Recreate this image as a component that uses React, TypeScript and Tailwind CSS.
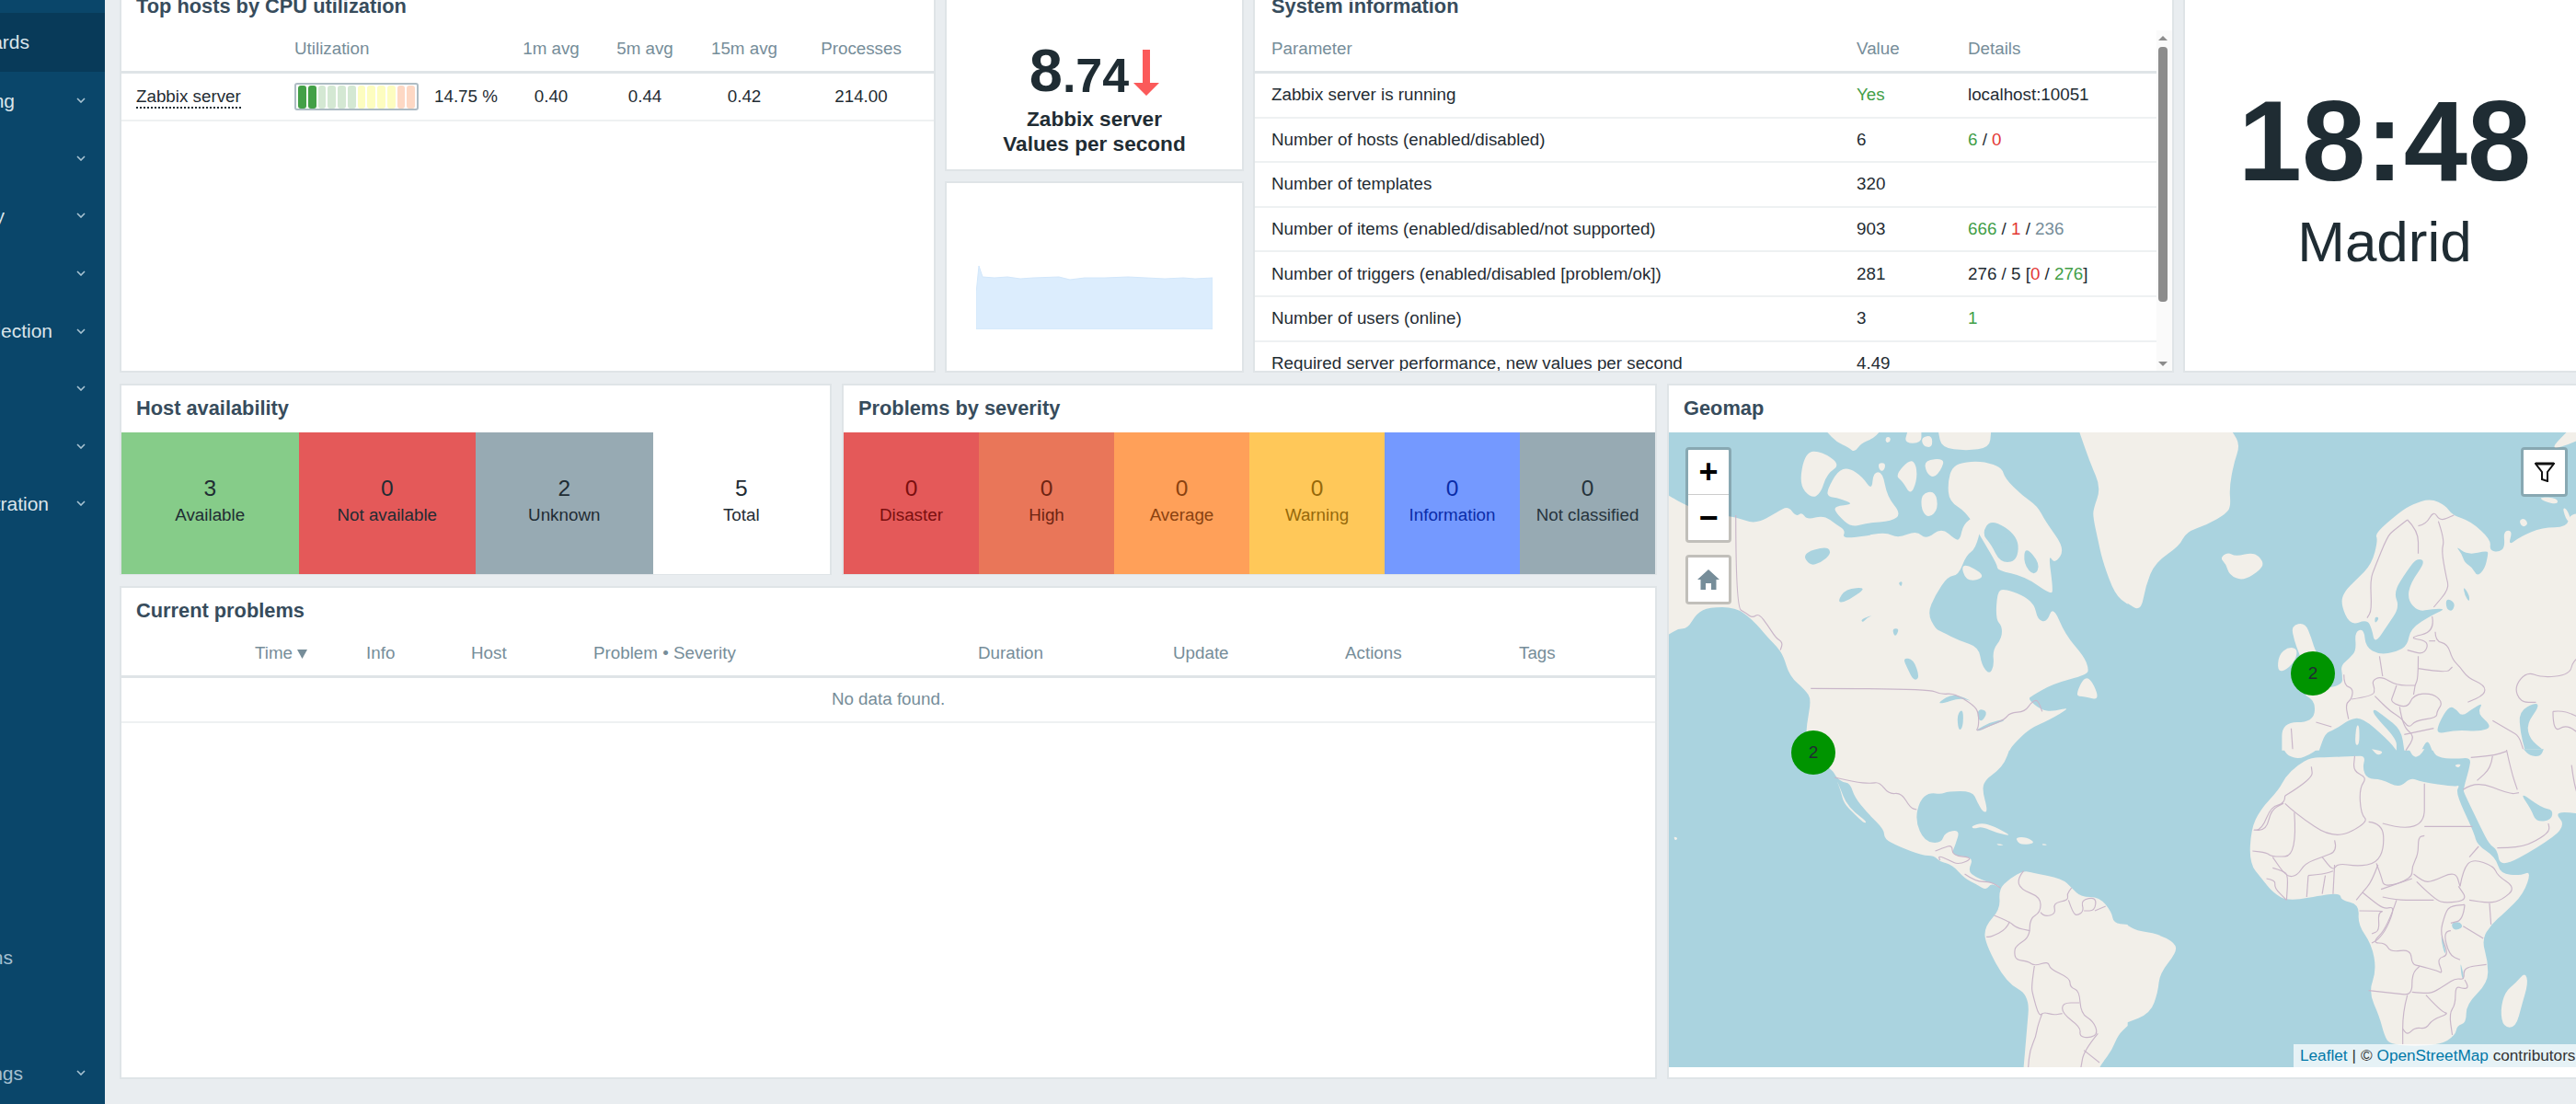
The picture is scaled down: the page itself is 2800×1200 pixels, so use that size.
// Zabbix global view dashboard, scrolled so that the top row and the sidebar are cut off
const navTop = [
  { label: "Dashboards", clip: "w-[32px]", active: true },
  { label: "Monitoring", clip: "w-[16px]" },
  { label: "Services", clip: "w-0" },
  { label: "Inventory", clip: "w-[5px]" },
  { label: "Reports", clip: "w-0" },
  { label: "Data collection", clip: "w-[57px]" },
  { label: "Alerts", clip: "w-0" },
  { label: "Users", clip: "w-0" },
  { label: "Administration", clip: "w-[53px]" },
]

const navBottom = [
  { label: "Integrations", clip: "w-[14px]", dim: true, noArrow: true },
  { label: "Help", clip: "w-0", dim: true, noArrow: true },
  { label: "User settings", clip: "w-[25px]", dim: true },
]

const cpuBars = [
  "bg-[#43a047]", "bg-[#43a047]", "bg-[#d4e8d3]", "bg-[#d4e8d3]", "bg-[#d4e8d3]", "bg-[#d4e8d3]",
  "bg-[#fdfdc0]", "bg-[#fdfdc0]", "bg-[#fdfdc0]", "bg-[#fdfdc0]", "bg-[#fdd8c4]", "bg-[#fdd8c4]",
]

const hostStats = [
  { n: 3, label: "Available", cls: "bg-[#86cc89] text-[#1f2c33]" },
  { n: 0, label: "Not available", cls: "bg-[#e45959] text-[#1f2c33]" },
  { n: 2, label: "Unknown", cls: "bg-[#97aab3] text-[#1f2c33]" },
  { n: 5, label: "Total", cls: "bg-white text-[#1f2c33]" },
]

const severities = [
  { label: "Disaster", cls: "bg-[#e45959] text-[#7a0f0f]" },
  { label: "High", cls: "bg-[#e97659] text-[#6e2412]" },
  { label: "Average", cls: "bg-[#ffa059] text-[#8a4210]" },
  { label: "Warning", cls: "bg-[#ffc859] text-[#96690a]" },
  { label: "Information", cls: "bg-[#7499ff] text-[#0a2ca8]" },
  { label: "Not classified", cls: "bg-[#97aab3] text-[#26343c]" },
]

const problemCols = ["", "Time", "Info", "Host", "Problem • Severity", "Duration", "Update", "Actions", "Tags"]

// map outlines, traced per quadrant in 3x map pixels
const landA = [
  "-2,205 15,215 50,235 120,265 215,275 280,300 350,260 385,240 410,275 430,260 445,285 500,270 540,300 570,320 560,345 620,340 700,325 740,345 800,320 830,350 880,310 925,350 940,350 950,300 990,270 1010,300 990,380 960,400 935,465 900,470 860,530 835,590 860,640 880,650 940,680 1000,700 1010,760 1035,790 1050,760 1045,710 1075,670 1075,630 1055,610 1060,520 1080,510 1140,530 1180,560 1190,610 1220,620 1240,565 1280,660 1340,730 1355,770 1350,790 1240,820 1170,860 1160,870 1200,905 1240,910 1300,895 1225,940 1165,965 1110,1020 1100,1037 440,1037 445,950 460,870 440,840 390,795 370,730 350,700 320,670 270,610 215,570 130,570 90,590 60,640 30,640 -2,660",
  "420,170 440,65 490,60 555,105 510,135 490,200 460,215",
  "510,190 545,125 580,115 625,145 655,190 660,130 690,130 705,210 750,265 720,290 640,295 590,310 545,270 530,240 600,235 550,215 515,210",
  "675,100 700,100 695,125 680,125",
  "730,140 780,85 800,110 800,160 780,205 755,160",
  "825,90 890,85 880,120 855,150 830,130",
  "815,200 860,190 870,250 840,280 815,255",
  "900,165 915,110 960,95 1020,95 1075,115 1085,150 1140,205 1190,240 1215,290 1280,380 1245,430 1225,395 1240,510 1235,530 1150,470 1060,450 1060,430 1000,330 960,260 905,225",
  "510,-2 680,-2 660,20 620,35 600,65 580,50 540,30",
  "700,15 715,15 715,30 700,35",
  "770,-2 815,-2 815,35 760,35",
  "815,15 850,10 850,50 820,45",
  "870,-2 1040,-2 1035,50 960,60 880,50",
  "1325,-2 1481,-2 1481,560 1440,530 1400,420 1385,350 1370,280 1370,250 1395,180 1360,100",
  "1310,860 1350,780 1395,875 1340,860",
  "940,420 1030,470 960,490",
]

const waterA = [
  "1010,330 1040,280 1130,340 1125,420 1070,425 1040,365",
  "1150,370 1200,430 1180,470 1145,430",
  "870,880 920,850 985,880 940,865 880,885",
  "930,920 950,900 950,960 935,975",
  "1000,900 1030,910 1010,945 995,930",
  "990,970 1040,945 1085,935 1080,942 1040,955 1000,975",
  "755,735 790,740 810,800 790,810 770,770",
  "545,550 570,510 640,505 590,540 560,555",
  "430,395 510,370 525,395 490,425 455,435",
  "620,610 660,595 640,605 625,620",
  "720,640 745,640 730,670",
  "740,490 755,485 750,505",
  "1070,335 1100,325 1100,360 1070,360",
]

const linesA = [
  "216,270 216,570 250,590 270,605 290,590 320,630 345,670 368,685 360,710",
  "458,835 835,835 880,855 920,850 985,890 1000,915 1000,960 990,975 1040,955 1085,935 1100,915 1150,910 1170,880 1190,870 1205,910",
]

const landB = [
  "-2,-2 340,-2 365,40 345,100 330,180 335,240 320,265 260,300 190,325 170,370 90,425 60,500 45,585 -2,555",
  "300,410 325,390 350,405 410,390 440,420 435,445 375,485 330,465 320,430",
  "490,725 520,700 550,705 545,740 515,775 485,780",
  "530,630 575,620 595,670 610,720 650,760 640,800 570,850 610,800 570,760 555,720 540,680",
  "700,520 740,480 790,430 810,350 800,330 880,260 920,235 980,215 1030,240 1050,270 1110,290 1175,350 1170,385 1200,390 1220,375 1215,320 1245,320 1230,370 1270,340 1340,310 1420,310 1430,265 1481,265 1481,1037 985,1037 970,1000 950,1037 895,1037 885,970 830,925 795,900 795,920 870,1000 870,1037 840,1000 760,930 720,935 670,970 640,980 620,1037 500,1037 500,945 600,945 610,880 565,850 600,840 695,825 695,790 690,760 720,735 740,710 735,650 765,640 770,700 815,725 870,715 905,695 915,640 985,595 1030,575 985,575 940,585 905,545 915,490 965,420 935,410 905,450 860,520 880,570 840,630 800,690 790,640 775,610 720,630 690,560",
  "740,955 750,955 750,1020 735,1020",
  "1370,50 1420,-2 1481,-2 1481,15 1400,50",
  "1330,210 1390,215 1390,235 1345,225",
  "1265,285 1285,280 1295,300 1275,310",
  "1405,245 1420,250 1435,290 1420,290",
]

const waterB = [
  "1060,370 1100,400 1165,385 1165,400 1155,445 1130,470 1115,440 1090,425 1080,395",
  "1000,985 1005,950 1040,890 1065,905 1075,920 1090,920 1110,905 1150,880 1130,915 1180,960 1140,975 1060,970",
  "1265,910 1320,880 1330,895 1290,950 1300,1000 1345,1037 1285,1037 1270,980",
  "1030,540 1060,555 1050,585 1030,575",
  "1085,500 1105,530 1105,555 1090,530",
  "800,600 815,605 800,625",
]

const linesB = [
  "905,285 860,320 840,340 800,440 785,480 790,580 775,605",
  "905,285 940,320 940,395",
  "940,305 965,300 990,255 1010,290 1055,270",
  "1005,290 1025,350 1015,385 1030,470 1040,510 990,570",
  "985,600 995,650 905,670 975,680 960,725 905,710",
  "995,650 995,680 1035,690 1050,740 1075,765 1100,800 1155,825 1155,855 1100,880",
  "975,680 995,680",
  "940,730 940,800 930,825",
  "940,770 1030,785 1050,765",
  "815,730 825,795",
  "700,790 700,825 730,835 725,870 705,885 715,935",
  "725,870 795,860 800,835 790,810 820,795 870,825 930,825",
  "870,825 860,855 850,880 905,900 925,855 985,850 1020,880 1000,910 1000,930 930,940 910,965 885,930 850,910 800,860",
  "925,855 930,825",
  "880,895 890,960 930,990 900,1037",
  "895,985 990,965",
  "530,965 535,1037",
  "610,945 660,960",
  "1180,940 1240,975 1265,990 1280,1037",
  "1479,720 1440,740 1430,790 1340,800 1290,780 1250,830 1270,880 1320,880",
  "1375,910 1375,980 1420,950 1479,1000",
  "1375,910 1410,905 1479,940",
]

const landC = [
  "400,-2 1100,-2 1085,40 1060,70 1025,95 1010,125 1030,200 1015,205 995,170 980,135 900,135 880,145 840,140 810,165 795,230 825,300 880,305 890,270 940,260 925,310 910,345 985,350 965,395 990,415 1025,430 1060,440 1070,450 1040,435 1025,458 995,440 955,420 915,375 875,365 855,345 820,345 740,315 695,290 695,260 640,205 600,155 585,110 560,105 540,90 525,60",
  "540,95 555,130 570,170 600,205 640,235 630,240 600,210 565,175 555,135",
  "975,250 1010,238 1050,250 1110,282 1060,272 1010,250 985,258",
  "1120,285 1155,285 1185,305 1140,310 1125,300",
  "1055,305 1085,310 1065,313",
  "1205,305 1225,310 1205,312",
  "15,282 30,288 20,297",
  "1065,455 1100,420 1145,395 1170,400 1270,420 1300,450 1330,480 1390,480 1430,530 1435,565 1481,570 1481,900 1450,930 1430,980 1400,1020 1390,1037 1145,1037 1155,920 1165,800 1090,760 1020,630 1020,575 1070,520",
]

const linesC = [
  "535,90 600,105 650,110 680,105 710,145 750,140 780,190 800,195",
  "860,330 885,320 915,310 915,345 985,352 935,375 905,360 870,345 875,360",
  "955,405 990,430 1040,430 1070,450",
  "1145,395 1125,420 1135,455 1200,480 1200,530 1165,550 1165,610 1120,640 1115,660 1120,685 1160,690 1180,705 1225,690 1230,715 1295,745 1295,775 1325,785 1330,860 1370,885 1385,925 1360,940 1325,935 1330,905 1270,860 1270,825 1325,825",
  "1200,530 1210,545 1250,535 1240,500 1290,490 1285,470 1300,450",
  "1290,490 1305,535 1320,540 1340,525 1330,490 1380,480 1375,525 1340,525",
  "1375,525 1410,510",
  "1050,540 1100,560 1120,580 1165,590",
  "1100,560 1090,585 1040,610 1025,610",
  "1180,705 1170,770 1175,800 1195,870 1210,855 1240,865 1270,860",
  "1205,860 1190,900 1185,935 1165,980 1160,1037",
  "1385,925 1340,980 1330,1037",
  "1340,980 1390,1020",
]

const landD = [
  "-2,570 30,590 100,600 155,630 160,660 105,730 100,790 75,860 -2,890",
  "490,130 510,90 550,50 595,25 650,25 735,20 770,20 760,60 775,95 820,95 880,125 915,90 950,105 1055,120 1075,115 1060,140 1120,270 1130,310 1190,350 1205,405 1270,410 1305,395 1280,470 1220,530 1175,570 1145,620 1165,690 1165,760 1095,830 1095,890 1065,900 1060,930 1010,965 850,965 830,930 815,870 780,790 805,720 790,635 745,570 750,505 690,490 690,470 650,470 520,495 470,465 435,420 395,370 400,260 430,195",
  "985,-2 1000,25 1060,30 1110,25 1105,60 1085,130 1090,145 1140,250 1170,310 1195,325 1205,385 1325,320 1420,250 1375,200 1481,210 1481,-2",
  "505,-2 615,-2 590,15 555,30 520,20",
  "910,-2 960,-2 945,20 925,25",
  "790,-2 830,5 810,20",
  "1055,50 1080,45 1070,60",
  "1285,725 1295,760 1275,830 1255,905 1215,905 1205,850 1220,790 1255,760",
]

const waterD = [
  "1280,-2 1345,-2 1335,22 1300,20",
  "1265,135 1340,190 1375,195 1370,230 1320,235 1305,195",
  "1045,565 1075,560 1085,580 1055,590",
  "1015,600 1030,660 1025,665 1015,625",
  "1075,685 1090,750 1080,745",
]

const linesD = [
  "510,150 600,95 595,55",
  "510,150 510,175 465,185 435,260 400,262 450,262 465,195 505,175",
  "510,175 540,205 670,295 780,235 755,210 750,125 775,90 730,70 735,20",
  "540,205 550,345 470,350 450,335 405,330",
  "670,295 680,330 630,350 575,370 550,410 515,415 470,350",
  "780,235 825,240 830,320 805,370 745,380 680,370 665,395 630,350",
  "825,240 960,280 960,110",
  "805,370 820,410 830,450 920,420 920,380 940,340 940,285 960,280",
  "960,250 1115,250",
  "925,405 955,430 985,430 1060,395 1075,445",
  "935,430 995,490 1030,500 1100,490 1070,445",
  "1075,445 1085,390 1115,355 1185,380 1195,410 1255,450 1210,490 1170,500 1105,490",
  "1105,350 1135,315",
  "820,455 920,420",
  "825,480 870,490 930,490 990,490",
  "670,375 665,470",
  "810,375 790,430 760,465 740,490",
  "585,410 580,480",
  "640,410 630,470",
  "585,410 640,405 665,395",
  "470,385 505,395 520,410 515,490",
  "450,420 480,425 475,450 515,490",
  "760,465 790,490 830,520 865,510 840,580 810,620 790,630",
  "750,525 835,525 810,530 815,590 790,600",
  "870,490 840,580 790,630 835,630 850,660 915,650 920,700 945,705 1000,720 1020,730 1000,680 1040,670 1010,600 1025,540 1040,510 1090,505",
  "1090,505 1085,555 1045,565",
  "1085,575 1150,615",
  "1170,500 1175,570",
  "1045,590 1020,590 1040,670 1075,685",
  "780,785 870,795 920,800 920,730 945,705",
  "920,790 965,795 990,790 1030,765 1060,745 1090,750 1085,710 1160,700",
  "1090,750 1105,775 1085,780 1060,770 1060,830 1040,860 1050,930",
  "905,800 890,855 890,960",
  "965,800 1015,855 1040,860 985,880 965,910 930,905 905,930 890,910",
  "1085,130 1125,100 1235,145 1265,140",
  "1195,320 1265,320 1325,295 1365,265 1360,240",
  "1110,25 1180,20 1225,5",
  "1180,20 1175,60 1130,100",
  "1225,0 1240,70 1260,130",
  "1435,50 1445,130 1470,175",
]

const quadrants = [
  { x: 0, y: 0, land: landA, water: waterA, lines: linesA },
  { x: 1479, y: 0, land: landB, water: waterB, lines: linesB },
  { x: 0, y: 1035, land: landC, water: [] as string[], lines: linesC },
  { x: 1479, y: 1035, land: landD, water: waterD, lines: linesD },
]

// rounds the traced outline, points past the quadrant edge stay sharp so the seams close
function smooth(points: string, closed: boolean) {
  const pts = points.split(" ").map((s) => s.split(",").map(Number))
  const mid = (a: number[], b: number[]) => `${(a[0] + b[0]) / 2} ${(a[1] + b[1]) / 2}`
  const hard = (p: number[]) => p[0] <= -2 || p[0] >= 1481 || p[1] <= -2 || p[1] >= 1037
  if (closed) {
    let d = `M${mid(pts[pts.length - 1], pts[0])}`
    pts.forEach((p, i) => {
      const next = pts[(i + 1) % pts.length]
      d += hard(p) ? `L${p[0]} ${p[1]}L${mid(p, next)}` : `Q${p[0]} ${p[1]} ${mid(p, next)}`
    })
    return d + "Z"
  }
  let d = `M${pts[0][0]} ${pts[0][1]}`
  for (let i = 1; i < pts.length - 1; i++) {
    d += `Q${pts[i][0]} ${pts[i][1]} ${mid(pts[i], pts[i + 1])}`
  }
  const last = pts[pts.length - 1]
  return d + `L${last[0]} ${last[1]}`
}

function WorldMap() {
  return (
    <svg viewBox="0 0 2958 2070" preserveAspectRatio="none" className="block h-full w-full blur-[0.6px]">
      <rect width="2958" height="2070" fill="#aad3df" />
      {quadrants.map((q) => (
        <g key={`${q.x}-${q.y}`} transform={`translate(${q.x} ${q.y})`}>
          {q.land.map((p, i) => (
            <path key={i} d={smooth(p, true)} fill="#f2efe9" />
          ))}
          {q.water.map((p, i) => (
            <path key={i} d={smooth(p, true)} fill="#aad3df" />
          ))}
          {q.lines.map((p, i) => (
            <path key={i} d={smooth(p, false)} fill="none" stroke="#c9b6c9" strokeWidth="3.5" />
          ))}
        </g>
      ))}
    </svg>
  )
}

function NavRow({ label, clip, active, dim, noArrow }: { label: string; clip: string; active?: boolean; dim?: boolean; noArrow?: boolean }) {
  return (
    <div className={`flex items-center justify-between pr-[21px] ${active ? "h-[64px] bg-[#083a59]" : "h-[62.6px]"}`}>
      <div className={`flex justify-end overflow-hidden whitespace-nowrap text-[21px] ${dim ? "text-[#a4bfcf]" : "text-[#dbe5eb]"} ${clip}`}>{label}</div>
      {!active && !noArrow && (
        <svg width="10" height="6" viewBox="0 0 10 6" fill="none" stroke="#a9c3d2" strokeWidth="1.6">
          <path d="M1 1l4 4 4-4" />
        </svg>
      )}
    </div>
  )
}

function Sidebar() {
  return (
    <nav className="h-[1200px] w-[114px] shrink-0 bg-[#0a466a] pt-[14px]">
      {navTop.map((item) => (
        <NavRow key={item.label} {...item} />
      ))}
      <div className="mt-[431.2px]">
        {navBottom.map((item) => (
          <NavRow key={item.label} {...item} />
        ))}
      </div>
    </nav>
  )
}

function Title({ children }: { children: React.ReactNode }) {
  return (
    <div className="flex h-[51px] items-center pl-[16px] text-[21.8px] font-bold text-[#374c5c]">{children}</div>
  )
}

function TopHosts() {
  const head = "flex items-center justify-center"
  const grid = "grid grid-cols-[188px_226px_106px_98px_118px_136px_1fr]"
  return (
    <section className="h-[425px] w-[887px] shrink-0 border-2 border-[#dfe4e7] bg-white">
      <Title>Top hosts by CPU utilization</Title>
      <div className={`${grid} h-[47px] border-b-[3px] border-[#dfe4e7] pb-[3px] text-[18.8px] text-[#768d99]`}>
        <div />
        <div className="flex items-center">Utilization</div>
        <div className={head}>1m avg</div>
        <div className={head}>5m avg</div>
        <div className={head}>15m avg</div>
        <div className={head}>Processes</div>
      </div>
      <div className={`${grid} h-[52px] items-center border-b-2 border-[#eef1f2] text-[18.8px] text-[#1f2c33]`}>
        <div className="pl-[16px]">
          <span className="border-b-2 border-dotted border-[#1f2c33] pb-[1px]">Zabbix server</span>
        </div>
        <div className="flex items-center gap-[17px]">
          <div className="flex h-[30px] w-[135px] items-center gap-[2px] rounded-[3px] border-2 border-[#aebcc4] px-[2px]">
            {cpuBars.map((c, i) => (
              <div key={i} className={`h-[25px] w-[9px] rounded-[3px] ${c}`} />
            ))}
          </div>
          <span>14.75 %</span>
        </div>
        <div className="text-center">0.40</div>
        <div className="text-center">0.44</div>
        <div className="text-center">0.42</div>
        <div className="text-center">214.00</div>
      </div>
    </section>
  )
}

function ValueCard() {
  return (
    <section className="flex h-[206px] flex-col items-center border-2 border-[#dfe4e7] bg-white pt-[66px] text-[#1f2c33]">
      <div className="flex h-[54px] items-end font-bold leading-none">
        <span className="text-[65px] leading-[50px]">8</span>
        <span className="text-[52px] leading-[40px]">.74</span>
        <svg width="28" height="50" viewBox="0 0 28 50" className="mb-[-2px] ml-[5px]">
          <path d="M10 0h8v36h10L14 50 0 36h10z" fill="#fb5a5a" />
        </svg>
      </div>
      <div className="mt-[14px] text-center text-[22.6px] font-bold leading-[27px]">
        <div>Zabbix server</div>
        <div>Values per second</div>
      </div>
    </section>
  )
}

function Sparkline() {
  return (
    <section className="mt-[11px] h-[208px] border-2 border-[#dfe4e7] bg-white pl-[32px] pt-[90px]">
      <svg width="257" height="69" viewBox="0 0 257 69">
        <path
          d="M0 30L3 0L7 12L20 13L34 12L48 14L62 13L90 12L102 15L118 13L140 13L165 12L185 13L205 14L225 13L238 14L257 13V69H0z"
          fill="#dcedfd"
          stroke="#d2e7fb"
          strokeWidth="1"
        />
      </svg>
    </section>
  )
}

function G({ children }: { children: React.ReactNode }) {
  return <span className="text-[#429e47]">{children}</span>
}

function R({ children }: { children: React.ReactNode }) {
  return <span className="text-[#e33734]">{children}</span>
}

const sysRows: { p: string; v: string; vc?: string; d?: React.ReactNode }[] = [
  { p: "Zabbix server is running", v: "Yes", vc: "text-[#429e47]", d: "localhost:10051" },
  { p: "Number of hosts (enabled/disabled)", v: "6", d: <><G>6</G> / <R>0</R></> },
  { p: "Number of templates", v: "320" },
  { p: "Number of items (enabled/disabled/not supported)", v: "903", d: <><G>666</G> / <R>1</R> / <span className="text-[#768d99]">236</span></> },
  { p: "Number of triggers (enabled/disabled [problem/ok])", v: "281", d: <>276 / 5 [<R>0</R> / <G>276</G>]</> },
  { p: "Number of users (online)", v: "3", d: <G>1</G> },
  { p: "Required server performance, new values per second", v: "4.49" },
]

function SystemInfo() {
  const grid = "grid grid-cols-[636px_121px_1fr] pl-[18px]"
  return (
    <section className="h-[425px] w-[1001px] shrink-0 overflow-hidden border-2 border-[#dfe4e7] bg-white">
      <Title>
        <span className="ml-[2px]">System information</span>
      </Title>
      <div className="flex">
        <div className="min-w-0 flex-1">
          <div className={`${grid} h-[47px] items-center border-b-[3px] border-[#dfe4e7] pb-[3px] text-[18.8px] text-[#768d99]`}>
            <div>Parameter</div>
            <div>Value</div>
            <div>Details</div>
          </div>
          {sysRows.map((r) => (
            <div key={r.p} className={`${grid} h-[48.6px] items-center border-b-2 border-[#eef1f2] text-[18.8px] text-[#1f2c33]`}>
              <div className="whitespace-nowrap">{r.p}</div>
              <div className={r.vc}>{r.v}</div>
              <div>{r.d}</div>
            </div>
          ))}
        </div>
        <div className="flex h-[374px] w-[17px] shrink-0 flex-col items-center bg-[#fafafa] pr-[3px]">
          <div className="mt-[6px] h-0 w-0 border-x-[5px] border-b-[5px] border-x-transparent border-b-[#8c8c8c]" />
          <div className="mt-[7px] h-[277px] w-[10px] rounded-[4px] bg-[#8c8c8c]" />
          <div className="mt-[65px] h-0 w-0 border-x-[5px] border-t-[5px] border-x-transparent border-t-[#8c8c8c]" />
        </div>
      </div>
    </section>
  )
}

function ClockCard() {
  return (
    <section className="flex h-[425px] w-[438px] shrink-0 flex-col items-center border-2 border-[#dfe4e7] bg-white pt-[101px] text-[#1f2c33]">
      <div className="text-[124.5px] font-bold leading-[140px]">18:48</div>
      <div className="mt-[4px] text-[62px] leading-[72px]">Madrid</div>
    </section>
  )
}

function Availability() {
  return (
    <section className="h-[208px] w-[774px] shrink-0 border-2 border-[#dfe4e7] bg-white">
      <Title>Host availability</Title>
      <div className="flex h-[154px]">
        {hostStats.map((s) => (
          <div key={s.label} className={`flex flex-1 flex-col items-center justify-center pb-[5px] ${s.cls}`}>
            <div className="text-[24.5px] leading-[29px]">{s.n}</div>
            <div className="text-[18.8px] leading-[29px]">{s.label}</div>
          </div>
        ))}
      </div>
    </section>
  )
}

function Severity() {
  return (
    <section className="h-[208px] min-w-0 flex-1 border-2 border-[#dfe4e7] bg-white">
      <Title>Problems by severity</Title>
      <div className="flex h-[154px]">
        {severities.map((s) => (
          <div key={s.label} className={`flex flex-1 flex-col items-center justify-center pb-[5px] ${s.cls}`}>
            <div className="text-[24.5px] leading-[29px]">0</div>
            <div className="text-[18.8px] leading-[29px]">{s.label}</div>
          </div>
        ))}
      </div>
    </section>
  )
}

function CurrentProblems() {
  return (
    <section className="h-[536px] border-2 border-[#dfe4e7] bg-white">
      <Title>Current problems</Title>
      <div className="grid h-[47px] grid-cols-[145px_121px_114px_133px_418px_212px_187px_189px_1fr] items-center border-b-[3px] border-[#dfe4e7] pb-[3px] text-[18.8px] text-[#768d99]">
        {problemCols.map((c, i) => (
          <div key={i} className="flex items-center gap-[5px]">
            {c}
            {c === "Time" && (
              <svg width="11" height="10" viewBox="0 0 11 10">
                <path d="M0 0h11L5.5 10z" fill="#768d99" />
              </svg>
            )}
          </div>
        ))}
      </div>
      <div className="flex h-[49px] items-center justify-center border-b-2 border-[#eef1f2] text-[18.8px] text-[#768d99]">
        No data found.
      </div>
    </section>
  )
}

function MapButton({ className, children }: { className: string; children: React.ReactNode }) {
  return <div className={`flex items-center justify-center bg-white ${className}`}>{children}</div>
}

function Marker({ className }: { className: string }) {
  return (
    <div className={`absolute flex h-[48px] w-[48px] items-center justify-center rounded-full bg-[#009400] text-[19px] text-[#1f2c33] ${className}`}>
      2
    </div>
  )
}

function Geomap() {
  return (
    <section className="h-[756px] w-[1000px] shrink-0 border-2 border-[#dfe4e7] bg-white">
      <Title>Geomap</Title>
      <div className="relative h-[690px] overflow-hidden bg-[#aad3df]">
        <WorldMap />
        <div className="absolute left-[18px] top-[16px] w-[50px] overflow-hidden rounded-[4px] border-[3px] border-black/20 bg-clip-padding">
          <MapButton className="h-[49px] border-b border-[#ccc] text-[36px] font-bold leading-none text-black">+</MapButton>
          <MapButton className="h-[49px] text-[36px] font-bold leading-none text-black">−</MapButton>
        </div>
        <div className="absolute left-[18px] top-[133px] w-[50px] overflow-hidden rounded-[4px] border-[3px] border-black/20 bg-clip-padding">
          <MapButton className="h-[48px]">
            <svg width="24" height="22" viewBox="0 0 24 22">
              <path d="M12 0l12 11h-3.500v11H15v-7H9v7H3.500V11H0z" fill="#768d99" />
            </svg>
          </MapButton>
        </div>
        <div className="absolute left-[926px] top-[16px] w-[51px] overflow-hidden rounded-[4px] border-[3px] border-black/20 bg-clip-padding">
          <MapButton className="h-[48px]">
            <svg width="22" height="22" viewBox="0 0 22 22" fill="none">
              <path d="M1 2h20l-7 9v10l-6-2v-8z" stroke="#111" strokeWidth="2" fill="#fff" />
              <path d="M1 2h20" stroke="#111" strokeWidth="3" />
            </svg>
          </MapButton>
        </div>
        <Marker className="left-[676px] top-[238px]" />
        <Marker className="left-[133px] top-[324px]" />
        <div className="absolute bottom-0 left-[679px] flex h-[25px] w-[320px] items-center whitespace-nowrap bg-white/70 pl-[7px] text-[17.2px] text-[#333]">
          <span className="text-[#0078a8]">Leaflet</span>
          <span className="mx-[5px]">|</span>
          <span>©&nbsp;</span>
          <span className="text-[#0078a8]">OpenStreetMap</span>
          <span>&nbsp;contributors</span>
        </div>
      </div>
    </section>
  )
}

export default function App() {
  return (
    <div className="flex h-[1200px] w-[2800px] overflow-hidden bg-[#e9edf0] font-['Liberation_Sans',Arial,sans-serif]">
      <Sidebar />
      <main className="mt-[-20px] min-w-0 flex-1 pl-[16px]">
        <div className="flex gap-[10px]">
          <TopHosts />
          <div className="w-[325px] shrink-0">
            <ValueCard />
            <Sparkline />
          </div>
          <SystemInfo />
          <ClockCard />
        </div>
        <div className="mt-[12px] flex gap-[11px]">
          <div className="w-[1671px] shrink-0">
            <div className="flex gap-[11px]">
              <Availability />
              <Severity />
            </div>
            <div className="mt-[12px]">
              <CurrentProblems />
            </div>
          </div>
          <Geomap />
        </div>
      </main>
    </div>
  )
}
